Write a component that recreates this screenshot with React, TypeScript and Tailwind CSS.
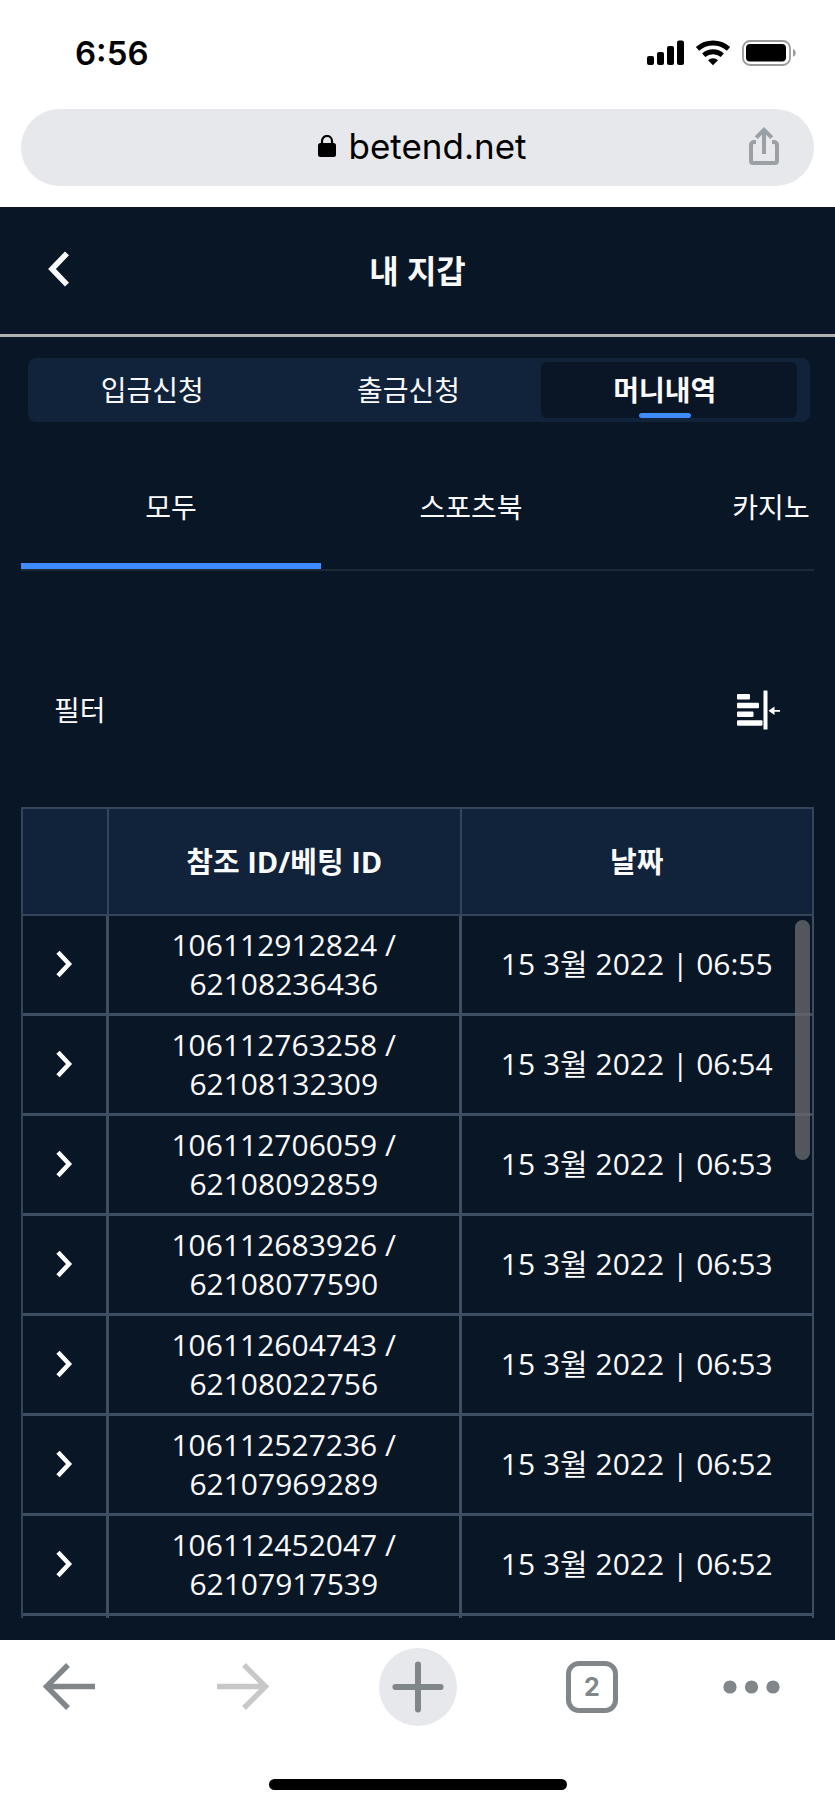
import type { ReactNode } from 'react'

type Row = { refId: string; betId: string; date: string; time: string }

const walletTabs = ['입금신청', '출금신청', '머니내역']
const categories = ['모두', '스포츠북', '카지노']

const rows: Row[] = [
  { refId: '106112912824', betId: '62108236436', date: '15 3월 2022', time: '06:55' },
  { refId: '106112763258', betId: '62108132309', date: '15 3월 2022', time: '06:54' },
  { refId: '106112706059', betId: '62108092859', date: '15 3월 2022', time: '06:53' },
  { refId: '106112683926', betId: '62108077590', date: '15 3월 2022', time: '06:53' },
  { refId: '106112604743', betId: '62108022756', date: '15 3월 2022', time: '06:53' },
  { refId: '106112527236', betId: '62107969289', date: '15 3월 2022', time: '06:52' },
  { refId: '106112452047', betId: '62107917539', date: '15 3월 2022', time: '06:52' },
]

function StatusBar() {
  return (
    <div className="flex h-[109px] items-start justify-between pt-[33px] pr-[39px] pl-[75px]">
      <span className="text-[33px] leading-[40px] font-semibold">6:56</span>
      <div className="flex h-10 items-center">
        <svg width="150" height="28" viewBox="646 39 150 28">
          {/* signal */}
          <rect x="647" y="56" width="7" height="9" rx="2" />
          <rect x="657" y="52" width="7" height="13" rx="2" />
          <rect x="667" y="46" width="7" height="19" rx="2" />
          <rect x="677" y="40.5" width="7" height="24.5" rx="2" />
          {/* wifi */}
          <path d="M697.5 48.8a23.5 23.5 0 0 1 31 0" fill="none" stroke="#000" strokeWidth="5" />
          <path d="M703.7 55.2a14.3 14.3 0 0 1 18.6 0" fill="none" stroke="#000" strokeWidth="4.8" />
          <path d="M708 60.2a7.6 7.6 0 0 1 10 0l-5 5z" />
          {/* battery */}
          <rect x="743" y="41" width="47" height="24" rx="7" fill="none" stroke="#9b9b9b" strokeWidth="1.8" />
          <rect x="746" y="44" width="40" height="17.5" rx="4" />
          <path d="M793 49c3.6 1.2 3.6 6.6 0 7.8z" fill="#9b9b9b" />
        </svg>
      </div>
    </div>
  )
}

function AddressBar() {
  return (
    <div className="px-[21px] pb-[21px]">
      <div className="grid h-[77px] grid-cols-[1fr_auto_1fr] items-center rounded-full bg-[#e7e8ec] pr-[34px] pb-1">
        <a href="#address" className="col-start-2 ml-[44px] flex items-center gap-3">
          <svg width="18" height="22" viewBox="0 0 18 22">
            <rect x="0" y="8" width="18" height="14" rx="2.5" />
            <path d="M4 9V6a5 5 0 0 1 10 0v3" fill="none" stroke="#000" strokeWidth="2.2" />
          </svg>
          <span className="text-[35px] leading-[44px]">betend.net</span>
        </a>
        <button aria-label="Share" className="justify-self-end">
          <svg width="32" height="40" viewBox="0 0 32 40" fill="none" stroke="#9aa0a6" strokeWidth="4">
            <path d="M8 16H6a3 3 0 0 0-3 3v16a2 2 0 0 0 2 2h22a2 2 0 0 0 2-2V19a3 3 0 0 0-3-3h-2" />
            <path d="M16 28V4M8.2 11.6 16 3.8l7.8 7.8" />
          </svg>
        </button>
      </div>
    </div>
  )
}

function Chevron() {
  return (
    <svg width="18" height="28" viewBox="0 0 18 28" fill="none" stroke="#fff" strokeWidth="4.5">
      <path d="M2 2.2 13 14 2 25.8" />
    </svg>
  )
}

function WalletHeader() {
  return (
    <header className="grid h-[130px] grid-cols-[1fr_auto_1fr] items-center border-b-[3px] border-[#b0b1b0] px-[48px]">
      <button aria-label="Back" className="justify-self-start pb-1">
        <svg width="22" height="36" viewBox="0 0 22 36" fill="none" stroke="#fafafa" strokeWidth="5.6">
          <path d="M19 2.4 4 18l15 15.6" />
        </svg>
      </button>
      <h1 className="text-[32px] leading-[40px] font-bold">내 지갑</h1>
    </header>
  )
}

function WalletTabs() {
  return (
    <div className="pt-[21px] pr-[25px] pl-[28px]">
      <nav className="grid h-[64px] grid-cols-3 rounded-lg bg-[#11233b] py-1 pr-[13px]">
        {walletTabs.map((label, i) => {
          const active = i === 2
          return (
            <button
              key={label}
              className={`relative rounded-md pr-2 text-[28px] leading-[40px] ${active ? 'bg-[#0a1626] font-bold' : ''}`}
            >
              {label}
              {active && <span className="absolute right-2 bottom-0 left-0 mx-auto h-[5px] w-[52px] rounded-full bg-[#3d8bfd]" />}
            </button>
          )
        })}
      </nav>
    </div>
  )
}

function CategoryTabs() {
  return (
    <nav className="mx-[21px] mt-[29px] flex overflow-hidden border-b-2 border-[#1c2937]">
      {categories.map((label, i) => (
        <button
          key={label}
          className={`w-[300px] shrink-0 border-b-[6px] py-9 text-[28px] leading-[40px] ${i === 0 ? 'border-[#3d8bfd]' : 'border-transparent'}`}
        >
          {label}
        </button>
      ))}
    </nav>
  )
}

function FilterBar() {
  return (
    <div className="flex h-[236px] items-center justify-between pt-[42px] pr-[54px] pl-[54px]">
      <span className="text-[28px] leading-[40px]">필터</span>
      <button aria-label="필터">
        <svg width="44" height="40" viewBox="0 0 44 40" fill="#fff">
          <rect x="0" y="4" width="13" height="5.5" rx="1" />
          <rect x="0" y="12.7" width="22" height="5.5" rx="1" />
          <rect x="0" y="21.5" width="16.5" height="5.5" rx="1" />
          <rect x="0" y="30.3" width="25.5" height="5.5" rx="1" />
          <rect x="26.5" y="0.5" width="4" height="39" rx="0.5" />
          <path d="M31.5 20.7 37.5 16.5v3.4H43v1.8h-5.5v3.4z" />
        </svg>
      </button>
    </div>
  )
}

function Cell({ children }: { children: ReactNode }) {
  return <td className="border-r-[3px] border-b-[3px] border-[#3e4e62] pb-[2px] text-center align-middle last:border-r-2">{children}</td>
}

function HistoryTable() {
  return (
    <div className="relative mx-[21px]">
      <table className="w-full table-fixed border-separate border-spacing-0 border-l-2 border-[#34445a] text-[30px] leading-[39px]">
        <colgroup>
          <col className="w-[86px]" />
          <col />
          <col />
        </colgroup>
        <thead>
          <tr className="h-[109px] bg-[#11233b] text-[29px]">
            <th className="border-y-2 border-r-2 border-[#34445a]" aria-label="상세" />
            <th className="border-y-2 border-r-2 border-[#34445a]">참조 ID/베팅 ID</th>
            <th className="border-y-2 border-r-2 border-[#34445a]">날짜</th>
          </tr>
        </thead>
        <tbody>
          {rows.map(row => (
            <tr key={row.refId} className="h-[100px]">
              <Cell>
                <button aria-label="열기" className="mx-auto block">
                  <Chevron />
                </button>
              </Cell>
              <Cell>
                {row.refId} /<br />
                {row.betId}
              </Cell>
              <Cell>
                {row.date} | {row.time}
              </Cell>
            </tr>
          ))}
          {/* top edge of the next row */}
          <tr className="h-[2px]">
            <td className="border-r-[3px] border-[#3e4e62]" />
            <td className="border-r-[3px] border-[#3e4e62]" />
            <td className="border-r-2 border-[#3e4e62]" />
          </tr>
        </tbody>
      </table>
      <div className="absolute top-[113px] right-1 h-[240px] w-[15px] rounded-full bg-[#66666a]/80" />
    </div>
  )
}

function BrowserToolbar() {
  return (
    <footer className="h-[167px] pt-2 text-[#80868a]">
      <div className="flex items-center justify-between px-[30px]">
        <button aria-label="Back" className="flex h-[78px] w-[78px] items-center justify-center">
          <svg width="52" height="48" viewBox="0 0 52 48" fill="none" stroke="currentColor" strokeWidth="5.4">
            <path d="M25 2 3.5 23.5 25 45M4 23.5h48" />
          </svg>
        </button>
        <button aria-label="Forward" className="flex h-[78px] w-[78px] items-center justify-center text-[#c8c8c8]">
          <svg width="52" height="48" viewBox="0 0 52 48" fill="none" stroke="currentColor" strokeWidth="5.4">
            <path d="M27 2l21.5 21.5L27 45M48 23.5H0" />
          </svg>
        </button>
        <button aria-label="New tab" className="flex h-[78px] w-[78px] items-center justify-center rounded-full bg-[#e7e8ec]">
          <svg width="52" height="52" viewBox="0 0 52 52" stroke="currentColor" strokeWidth="6" strokeLinecap="round">
            <path d="M26 3.4v45.2M3.4 26h45.2" />
          </svg>
        </button>
        <button aria-label="Tabs" className="flex h-[78px] w-[78px] items-center justify-center">
          <span className="flex h-[52px] w-[52px] items-center justify-center rounded-[13px] border-[5px] border-current text-[25px] leading-none font-bold">2</span>
        </button>
        <button aria-label="More" className="flex h-[78px] w-[78px] items-center justify-center">
          <svg width="88" height="14" viewBox="0 0 88 14" fill="currentColor" className="shrink-0">
            <circle cx="8" cy="7" r="6.6" />
            <circle cx="29.5" cy="7" r="6.6" />
            <circle cx="51" cy="7" r="6.6" />
          </svg>
        </button>
      </div>
      <div className="mx-auto mt-[53px] h-[11px] w-[298px] rounded-full bg-black" />
    </footer>
  )
}

export default function App() {
  return (
    <div className="min-h-screen overflow-hidden bg-white font-['Inter','Noto_Sans_CJK_KR',sans-serif] text-black">
      <StatusBar />
      <AddressBar />
      <main className="bg-[#091626] pb-[22px] font-['Open_Sans','Noto_Sans_CJK_KR',sans-serif] text-[#fafafa]">
        <WalletHeader />
        <WalletTabs />
        <CategoryTabs />
        <FilterBar />
        <HistoryTable />
      </main>
      <BrowserToolbar />
    </div>
  )
}
